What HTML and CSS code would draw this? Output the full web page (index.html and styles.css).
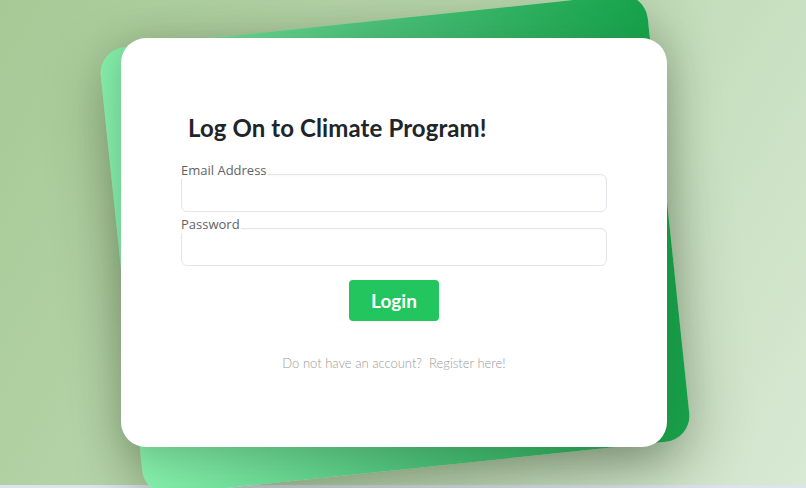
FILE: index.html
```html
<!DOCTYPE html>
<html lang="en">
<head>
<meta charset="utf-8">
<title>Log On to Climate Program!</title>
<link rel="stylesheet" href="styles.css">
</head>
<body>
<main class="stage">
  <div class="wrap">
    <div class="backdrop"></div>
    <form class="card">
      <h1 class="title">Log On to Climate Program!</h1>
      <div class="field">
        <label class="label" for="email">Email Address</label>
        <input class="input" id="email" type="email">
      </div>
      <div class="field">
        <label class="label" for="password">Password</label>
        <input class="input" id="password" type="password">
      </div>
      <div class="actions">
        <button class="btn" type="button">Login</button>
      </div>
      <p class="register">Do not have an account?&nbsp; Register here!</p>
    </form>
  </div>
</main>
<div class="taskbar"></div>
</body>
</html>
```
FILE: styles.css
```css
* { box-sizing: border-box; }
html, body { margin: 0; padding: 0; }
body {
  width: 806px;
  height: 488px;
  overflow: hidden;
  font-family: "Lato", "Noto Sans", sans-serif;
  background: linear-gradient(120deg, #a6c995 0%, #b9d6ad 45%, #d8e9d4 100%);
}
.stage {
  height: 485px;
  display: flex;
  align-items: center;
  justify-content: center;
  padding-right: 18px;
}
.wrap {
  position: relative;
  width: 546px;
  height: 409px;
}
.backdrop {
  position: absolute;
  top: -18px;
  bottom: -22px;
  left: -1px;
  right: -3px;
  border-radius: 26px;
  background: linear-gradient(to right, #86efac, #4cc07a 50%, #16a34a);
  transform: rotate(-6deg);
  box-shadow: 0 20px 60px rgba(40, 60, 30, 0.35);
}
.card {
  position: relative;
  height: 409px;
  margin: 0;
  background: #fff;
  border-radius: 25px;
  padding: 75px 60px 0;
  box-shadow: 0 10px 40px rgba(30, 50, 25, 0.25);
}
.title {
  margin: 0 0 18px 7px;
  font-size: 24px;
  line-height: 30px;
  font-weight: 700;
  color: #212529;
  letter-spacing: 0.1px;
}
.field {
  display: flex;
  flex-direction: column;
  margin-bottom: 3px;
}
.label {
  position: relative;
  z-index: 1;
  align-self: flex-start;
  background: #fff;
  font-family: "Open Sans", "Noto Sans", sans-serif;
  font-size: 13px;
  line-height: 18px;
  color: #5f6368;
  margin-bottom: -5px;
  padding-right: 1px;
}
.input {
  height: 38px;
  width: 100%;
  border: 1px solid #e3e6ea;
  border-radius: 6px;
  background: #fff;
  box-shadow: inset 0 1px 2px rgba(0,0,0,0.03);
  font: inherit;
}
.actions {
  display: flex;
  justify-content: center;
  margin-top: 14px;
}
.btn {
  width: 90px;
  height: 41px;
  border: none;
  border-radius: 4px;
  background: #22c55e;
  color: #fff;
  font-family: inherit;
  font-size: 19px;
  font-weight: 700;
}
.register {
  margin: 34px 0 0;
  text-align: center;
  font-size: 13px;
  font-weight: 300;
  color: #9a9a9a;
}
.taskbar {
  height: 3px;
  background: #dde3ef;
}
```
